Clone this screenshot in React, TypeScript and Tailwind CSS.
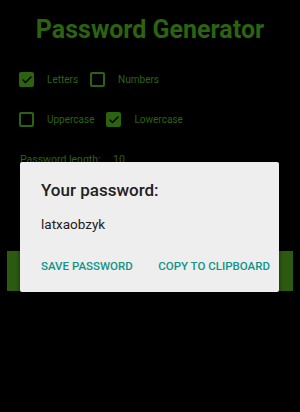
import { Check } from 'lucide-react'

const green = 'text-[#2b6311]'

function Box({ checked, label }: { checked?: boolean; label: string }) {
  return (
    <div className="flex items-center">
      {checked ? (
        <div className="w-[15px] h-[15px] rounded-[2px] bg-[#2b6311] flex items-center justify-center">
          <Check className="w-[12px] h-[12px] text-black" strokeWidth={3} />
        </div>
      ) : (
        <div className="w-[15px] h-[15px] rounded-[2px] border-2 border-[#2b6311]" />
      )}
      <span className={`ml-[13px] text-[10px] ${green}`}>{label}</span>
    </div>
  )
}

export default function App() {
  return (
    <div className="relative w-[300px] h-[412px] bg-black overflow-hidden" style={{ fontFamily: 'Roboto, "Noto Sans", sans-serif' }}>
      <h1 className={`pt-[15px] text-center text-[25px] leading-[30px] font-bold ${green}`}>Password Generator</h1>

      <div className="pl-[19px] mt-[27px] flex gap-[12px]">
        <Box checked label="Letters" />
        <Box label="Numbers" />
      </div>
      <div className="pl-[19px] mt-[25px] flex gap-[12px]">
        <Box label="Uppercase" />
        <Box checked label="Lowercase" />
      </div>

      <div className={`pl-[20px] mt-[25px] flex text-[10.5px] ${green}`}>
        <span className="w-[93px]">Password length:</span>
        <span>10</span>
      </div>

      <div className="mx-[7px] mt-[83px] h-[40px] bg-[#2b5a10]" />

      {/* dialog */}
      <div className="absolute left-[20px] top-[162px] w-[259px] h-[130px] bg-[#eeeeee] rounded-[2px] shadow-[0_2px_4px_rgba(0,0,0,0.5)] px-[21px]">
        <div className="pt-[17px] text-[17px] leading-[22px] font-medium text-[#212121]">Your password:</div>
        <div className="mt-[14px] text-[13.5px] leading-[18px] text-[#212121]">latxaobzyk</div>
        <div className="mt-[25px] flex justify-between text-[11.5px] font-medium text-[#119487] -mr-[12px]">
          <span>SAVE PASSWORD</span>
          <span>COPY TO CLIPBOARD</span>
        </div>
      </div>
    </div>
  )
}
